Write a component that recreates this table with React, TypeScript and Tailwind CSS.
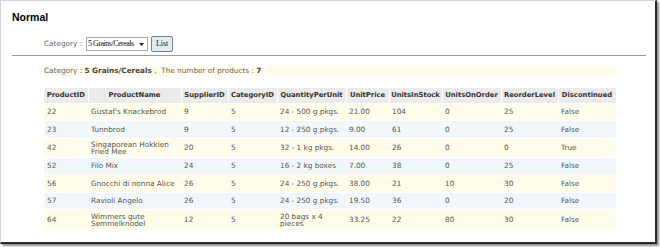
import React from "react";

const cols = [
  { name: "ProductID", w: "w-[44px]" },
  { name: "ProductName", w: "w-[93px]" },
  { name: "SupplierID", w: "w-[47px]" },
  { name: "CategoryID", w: "w-[49px]" },
  { name: "QuantityPerUnit", w: "w-[69px]" },
  { name: "UnitPrice", w: "w-[43px]" },
  { name: "UnitsInStock", w: "w-[53px]" },
  { name: "UnitsOnOrder", w: "w-[59px]" },
  { name: "ReorderLevel", w: "w-[57px]" },
  { name: "Discontinued", w: "w-[58px]" },
];

const rows: { h: string; bg: string; c: string[] }[] = [
  { h: "h-[17px]", bg: "bg-[#fffcea]", c: ["22", "Gustaf's Knackebrod", "9", "5", "24 - 500 g pkgs.", "21.00", "104", "0", "25", "False"] },
  { h: "h-[18px]", bg: "bg-[#f2f7fc]", c: ["23", "Tunnbrod", "9", "5", "12 - 250 g pkgs.", "9.00", "61", "0", "25", "False"] },
  { h: "h-[19px]", bg: "bg-[#fffcea]", c: ["42", "Singaporean Hokkien Fried Mee", "20", "5", "32 - 1 kg pkgs.", "14.00", "26", "0", "0", "True"] },
  { h: "h-[17px]", bg: "bg-[#f2f7fc]", c: ["52", "Filo Mix", "24", "5", "16 - 2 kg boxes", "7.00", "38", "0", "25", "False"] },
  { h: "h-[18px]", bg: "bg-[#fffcea]", c: ["56", "Gnocchi di nonna Alice", "26", "5", "24 - 250 g pkgs.", "38.00", "21", "10", "30", "False"] },
  { h: "h-[17px]", bg: "bg-[#f2f7fc]", c: ["57", "Ravioli Angelo", "26", "5", "24 - 250 g pkgs.", "19.50", "36", "0", "20", "False"] },
  { h: "h-[21px]", bg: "bg-[#fffcea]", c: ["64", "Wimmers gute Semmelknodel", "12", "5", "20 bags x 4 pieces", "33.25", "22", "80", "30", "False"] },
];

export default function App() {
  return (
    <div className="w-[660px] h-[247px] bg-white overflow-hidden">
      <div className="w-[657px] h-[244px] border-t border-l border-[#d4d4d4] border-r-2 border-b-2 border-r-[#2a2a2a] border-b-[#2a2a2a] shadow-[2px_2px_2px_rgba(0,0,0,0.45)] bg-white">
        <div className="pl-[11px] pr-[9px]">
          <div className="pt-[10px] h-[23px] text-[10.5px] leading-[12px] font-bold text-black" style={{ fontFamily: '"Liberation Sans", Arial, sans-serif' }}>
            Normal
          </div>
          <div className="mt-[12px] h-[16px] flex items-center pl-[32px]">
            <span className="text-[7.3px] text-[#666]" style={{ fontFamily: '"DejaVu Sans", Verdana, sans-serif' }}>
              Category :
            </span>
            <div className="ml-[4px] w-[62px] h-[14px] border border-[#a8a8a8] bg-white flex items-center justify-between pl-[1px] pr-[3px]">
              <span className="text-[8px] tracking-[-0.5px] text-[#111]" style={{ fontFamily: '"Liberation Serif", "Times New Roman", serif' }}>
                5 Grains/Cereals
              </span>
              <svg width="5" height="3" viewBox="0 0 5 3">
                <path d="M0 0 L5 0 L2.5 3 Z" fill="#222" />
              </svg>
            </div>
            <div className="ml-[3px] w-[22px] h-[16px] border border-[#6f8396] rounded-[2px] bg-[#e4ecf3] flex items-center justify-center text-[8px] text-[#111]" style={{ fontFamily: '"Liberation Serif", "Times New Roman", serif' }}>
              List
            </div>
          </div>
          <div className="mt-[3px] h-px bg-[#9a9a9a]" />
          <div className="ml-[32px] mt-[10px] w-[572px] h-[10px] bg-[#fffcec] flex items-center text-[7.3px] text-[#666]" style={{ fontFamily: '"DejaVu Sans", Verdana, sans-serif' }}>
            <span>Category :&nbsp;</span>
            <span className="font-bold text-[#444]">5 Grains/Cereals</span>
            <span>&nbsp;,&nbsp;&nbsp;The number of products :&nbsp;</span>
            <span className="font-bold text-[#444]">7</span>
          </div>
          <table className="ml-[32px] mt-[12px] w-[572px] table-fixed border-collapse" style={{ fontFamily: '"DejaVu Sans", Verdana, sans-serif' }}>
            <thead>
              <tr className="h-[15px] bg-[#ebebeb]">
                {cols.map((c) => (
                  <th key={c.name} className={`${c.w} p-0 text-center font-bold text-[6.8px] text-[#333] border-r border-white whitespace-nowrap`}>
                    {c.name}
                  </th>
                ))}
              </tr>
            </thead>
            <tbody>
              {rows.map((r) => (
                <tr key={r.c[0]} className={`${r.h} ${r.bg} border-t border-white`}>
                  {r.c.map((v, i) => (
                    <td key={i} className="p-0 pl-[3px] pr-[2px] align-middle text-left text-[7.3px] leading-[7px] text-[#555]">
                      {v}
                    </td>
                  ))}
                </tr>
              ))}
            </tbody>
          </table>
        </div>
      </div>
    </div>
  );
}
